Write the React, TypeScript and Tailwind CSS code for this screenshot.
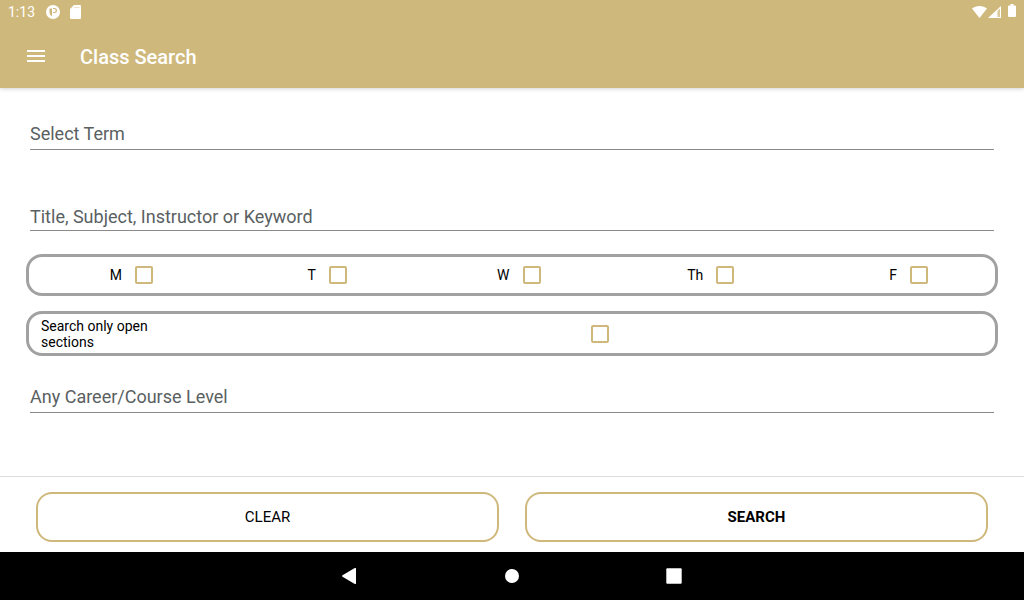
import React, { useState } from 'react';
import { clsx, type ClassValue } from 'clsx';
import { twMerge } from 'tailwind-merge';

function cn(...inputs: ClassValue[]) {
  return twMerge(clsx(inputs));
}

const DAYS = [
  { id: 'mon', label: 'M' },
  { id: 'tue', label: 'T' },
  { id: 'wed', label: 'W' },
  { id: 'thu', label: 'Th' },
  { id: 'fri', label: 'F' },
];

const fieldClass =
  'block w-full appearance-none rounded-none border-b border-[#8a8a8a] bg-transparent text-lg leading-6 text-[#5a5f62] outline-none placeholder:text-[#5a5f62] placeholder:opacity-100';

const StatusBar: React.FC = () => (
  <div className="flex h-6 items-center justify-between px-2 text-white">
    <div className="flex items-center">
      <span className="w-[38px] text-sm">1:13</span>
      <svg className="h-4 w-4" viewBox="0 0 16 16">
        <circle cx="7" cy="8" r="7" fill="currentColor" />
        <path
          fill="#cfb87c"
          d="M3.5 4.500H6v7.800c-1.500-.7-2.500-2.300-2.500-4.300ZM7 4h1.500a2.500 2.500 0 0 1 0 5H7V8h1.200a1.500 1.500 0 0 0 0-3H7Z"
        />
      </svg>
      <svg className="ml-2 h-4 w-3" viewBox="0 0 12 16">
        <path fill="currentColor" d="M4 1h6a1 1 0 0 1 1 1v12a1 1 0 0 1-1 1H1a1 1 0 0 1-1-1V5Z" />
        <path stroke="#cfb87c" strokeOpacity=".4" d="M4 3.500h5.500" />
      </svg>
    </div>
    <div className="flex items-center">
      <svg className="h-4 w-4" viewBox="0 0 16 16">
        <path fill="currentColor" d="M7.500 14 0 4.600C2 2.900 4.600 2 7.500 2S13 2.900 15 4.600Z" />
      </svg>
      <svg className="h-4 w-4" viewBox="0 0 16 16">
        <path fill="currentColor" fillRule="evenodd" d="M0 14 13 2v12ZM9.500 7v6H12V4.500Z" />
        <path fill="currentColor" fillOpacity=".25" d="M9.500 7v6H12V4.500Z" />
      </svg>
      <svg className="ml-1 h-4 w-2" viewBox="0 0 8 16">
        <path fill="currentColor" d="M2.500 0h3v1.500H7a1 1 0 0 1 1 1V12a1 1 0 0 1-1 1H1a1 1 0 0 1-1-1V2.500a1 1 0 0 1 1-1h1.500Z" />
      </svg>
    </div>
  </div>
);

const Toolbar: React.FC = () => (
  <div className="flex h-16 items-center px-6 text-white">
    <button type="button" aria-label="Open menu" className="mr-8 h-6 w-6">
      <svg className="h-6 w-6" viewBox="0 0 24 24" fill="currentColor">
        <path d="M3 6h18v2H3zM3 11h18v2H3zM3 16h18v2H3z" />
      </svg>
    </button>
    <h1 className="pt-0.5 text-xl font-medium">Class Search</h1>
  </div>
);

const CheckBox: React.FC<React.ComponentProps<'input'>> = ({ className, ...props }) => (
  <input
    type="checkbox"
    className={cn(
      'h-[18px] w-[18px] shrink-0 appearance-none rounded-xs border-2 border-[#cfb87c] checked:bg-[#cfb87c]',
      className,
    )}
    {...props}
  />
);

const NavBar: React.FC = () => (
  <nav className="flex h-12 items-center justify-center gap-[138px] bg-black text-white">
    <button type="button" aria-label="Back" className="h-6 w-6">
      <svg viewBox="0 0 24 24" fill="currentColor">
        <path d="M18 4.800v14.400a.8.8 0 0 1-1.200.7L4.500 12.700a.8.8 0 0 1 0-1.400l12.300-7.200a.8.8 0 0 1 1.200.7Z" />
      </svg>
    </button>
    <button type="button" aria-label="Home" className="h-6 w-6">
      <svg viewBox="0 0 24 24" fill="currentColor">
        <circle cx="12" cy="12" r="7" />
      </svg>
    </button>
    <button type="button" aria-label="Recent apps" className="h-6 w-6">
      <svg viewBox="0 0 24 24" fill="currentColor">
        <rect x="4.300" y="4.300" width="15.400" height="15.400" rx="1" />
      </svg>
    </button>
  </nav>
);

export default function App() {
  const [keyword, setKeyword] = useState('');

  return (
    <div className="flex min-h-screen flex-col bg-white font-[Roboto,sans-serif] text-black">
      <header className="bg-[#cfb87c] shadow-[0_1px_4px_rgba(0,0,0,0.18)]">
        <StatusBar />
        <Toolbar />
      </header>

      <form className="flex flex-1 flex-col" onSubmit={(e) => e.preventDefault()} onReset={() => setKeyword('')}>
        <div className="flex-1 px-[26px] pt-[30px]">
          <div className="px-1">
            <select aria-label="Term" className={cn(fieldClass, 'h-8')}>
              <option>Select Term</option>
            </select>
            <input
              type="text"
              aria-label="Keyword"
              placeholder="Title, Subject, Instructor or Keyword"
              value={keyword}
              onChange={(e) => setKeyword(e.target.value)}
              className={cn(fieldClass, 'mt-[53px] h-7')}
            />
          </div>

          <div className="mt-[23px] flex h-[42px] items-center justify-between rounded-2xl border-3 border-[#a1a1a1] pl-[78px] pr-[67px]">
            {DAYS.map((day) => (
              <label key={day.id} className="flex w-[46px] items-center justify-end gap-[13px] text-sm">
                {day.label}
                <CheckBox name={day.id} />
              </label>
            ))}
          </div>

          <label className="mt-[15px] flex h-[45px] items-center rounded-2xl border-3 border-[#a1a1a1] pl-3 text-sm leading-4">
            <span className="w-[calc(60%-22px)] shrink-0">
              <span className="block w-28">Search only open sections</span>
            </span>
            <CheckBox name="openOnly" />
          </label>

          <div className="mt-[25px] px-1">
            <select aria-label="Career or course level" className={cn(fieldClass, 'h-8')}>
              <option>Any Career/Course Level</option>
            </select>
          </div>
        </div>

        <div className="flex gap-[26px] border-t border-[#dcdcdc] px-9 pb-[10px] pt-[15px] text-[15px]">
          <button type="reset" className="h-[50px] flex-1 rounded-2xl border-2 border-[#cfb87c]">
            CLEAR
          </button>
          <button type="submit" className="h-[50px] flex-1 rounded-2xl border-2 border-[#cfb87c] font-bold">
            SEARCH
          </button>
        </div>
      </form>

      <NavBar />
    </div>
  );
}
